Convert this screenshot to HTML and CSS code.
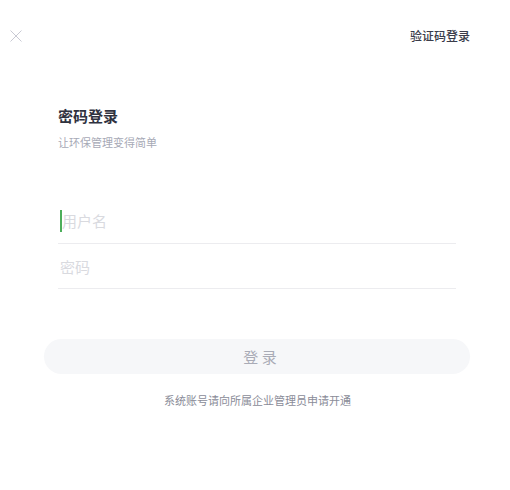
FILE: index.html
```html
<!DOCTYPE html>
<html lang="zh-CN">
<head>
<meta charset="utf-8">
<link rel="stylesheet" href="styles.css">
</head>
<body>
<div class="page">
  <div class="topbar">
    <svg class="close" width="12" height="12" viewBox="0 0 12 12"><path d="M0.5 0.5L11.5 11.5M11.5 0.5L0.5 11.5" stroke="#c9cad4" stroke-width="1" fill="none"/></svg>
    <span class="switch">验证码登录</span>
  </div>
  <div class="heading">
    <div class="title">密码登录</div>
    <div class="subtitle">让环保管理变得简单</div>
  </div>
  <div class="form">
    <div class="field first"><span class="caret"></span><span class="ph">用户名</span></div>
    <div class="field second"><span class="ph">密码</span></div>
  </div>
  <div class="btn">登 录</div>
  <div class="note">系统账号请向所属企业管理员申请开通</div>
</div>
</body>
</html>
```
FILE: styles.css
```css
html, body {
  margin: 0;
  padding: 0;
  background: #ffffff;
}
body {
  font-family: "Noto Sans CJK SC", "Noto Sans", sans-serif;
}
.page {
  width: 510px;
  height: 490px;
}
.topbar {
  display: flex;
  justify-content: space-between;
  align-items: center;
  padding: 29px 40px 0 10px;
  height: 14px;
}
.close {
  display: block;
}
.switch {
  font-size: 12px;
  font-weight: 500;
  color: #3a3c4a;
  line-height: 14px;
}
.heading {
  padding: 63px 0 0 58px;
}
.title {
  font-size: 15px;
  font-weight: 700;
  color: #2f3240;
  line-height: 20px;
}
.subtitle {
  margin-top: 9px;
  font-size: 11px;
  color: #a7a9b6;
  line-height: 14px;
}
.form {
  margin: 49px 54px 0 58px;
}
.field {
  border-bottom: 1px solid #ececef;
  display: flex;
  align-items: flex-start;
}
.field.first {
  height: 45px;
}
.field.second {
  height: 44px;
}
.caret {
  width: 2px;
  height: 22px;
  background: #4cae5a;
  margin: 12px 0 0 2px;
}
.ph {
  font-size: 15px;
  color: #d9dadf;
  line-height: 20px;
}
.field.first .ph {
  margin-top: 13px;
}
.field.second .ph {
  margin-top: 13px;
  padding-left: 2px;
}
.btn {
  margin: 50px 40px 0 44px;
  height: 35px;
  border-radius: 18px;
  background: #f6f7f9;
  color: #a9abb6;
  font-size: 15px;
  display: flex;
  align-items: center;
  justify-content: center;
  line-height: 20px;
  padding-left: 6px;
}
.note {
  margin-top: 19px;
  text-align: center;
  font-size: 11px;
  color: #8a8c98;
  line-height: 14px;
  padding-left: 5px;
}
```
